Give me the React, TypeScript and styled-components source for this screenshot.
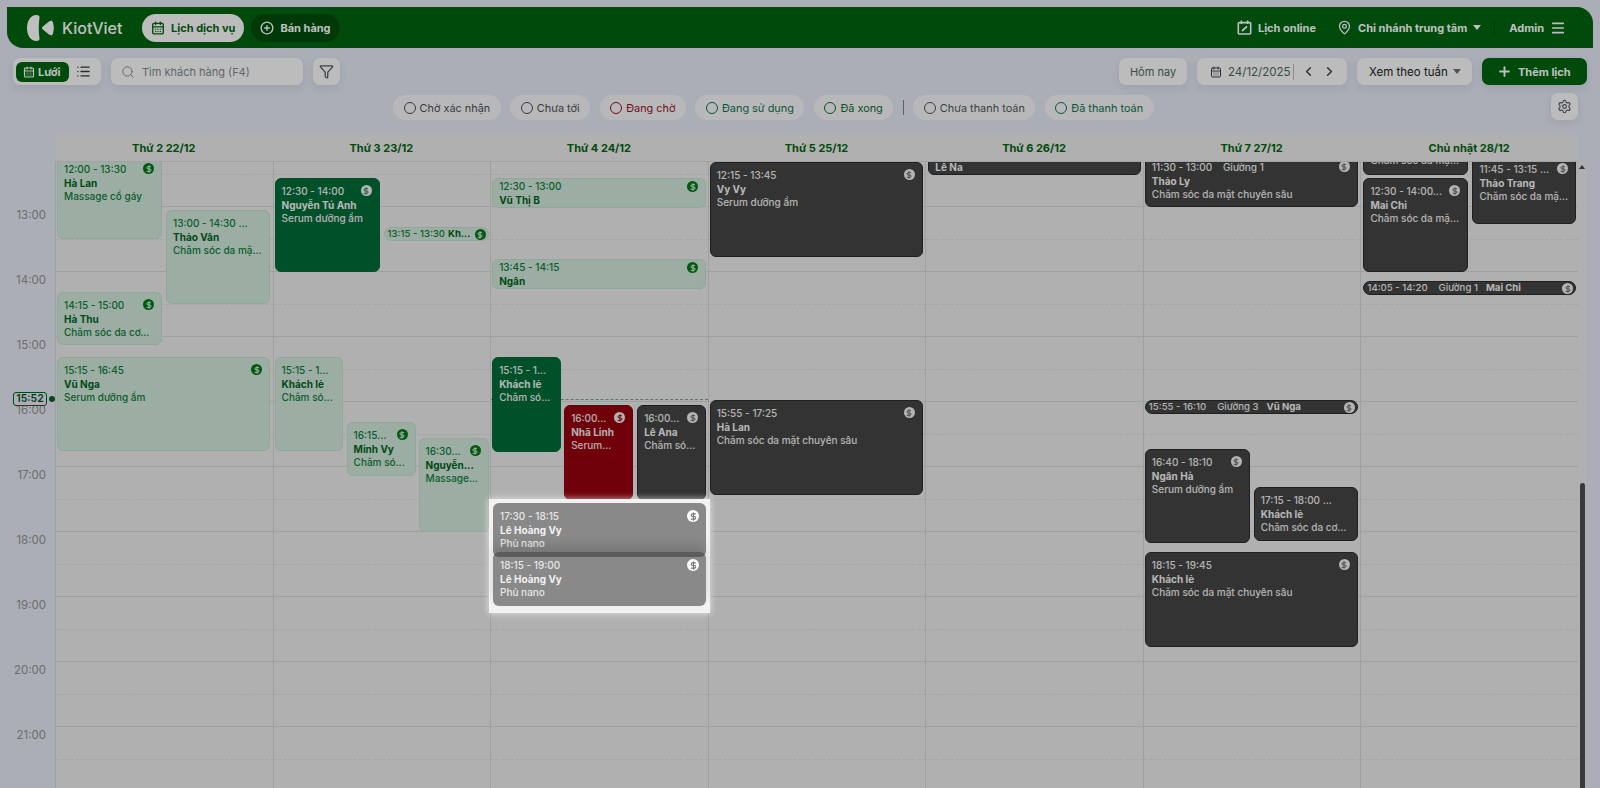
import React from 'react'
import styled, { createGlobalStyle } from 'styled-components'
import {
  CalendarDays,
  ChevronLeft,
  ChevronRight,
  CirclePlus,
  DollarSign,
  Funnel,
  List,
  MapPin,
  Menu,
  Plus,
  Search,
  Settings,
} from 'lucide-react'

type Kind = 'light' | 'green' | 'red' | 'dark'

interface Booking {
  kind: Kind
  top: number
  left: number
  width: number
  height: number
  time: string
  name?: string
  service?: string
  bed?: string
  bar?: boolean
  noBadge?: boolean
  short?: boolean
}

const GlobalStyle = createGlobalStyle`
  * { box-sizing: border-box; }
  html, body { margin: 0; height: 100%; overflow: hidden; }
  body {
    background: #e4e9f4;
    font-family: Inter, "Liberation Sans", sans-serif;
    font-size: 12px;
  }
`

const Page = styled.div`
  position: relative;
  width: 1600px;
  height: 788px;
  overflow: hidden;
  padding-top: 7px;
`

const TopBar = styled.header`
  display: flex;
  align-items: center;
  height: 41px;
  margin: 0 7px;
  padding: 0 27px 0 20px;
  background: #00650f;
  border-radius: 0 16px 0 16px;
  color: #fff;
  font-weight: 700;
`

const Brand = styled.div`
  display: flex;
  align-items: center;
  gap: 8px;
  width: 115px;
  font-size: 16px;
  font-weight: 500;
`

const NavPill = styled.div<{ $active?: boolean }>`
  display: flex;
  align-items: center;
  gap: 6px;
  height: 28px;
  padding: 0 9px;
  margin-right: 7px;
  border-radius: 14px;
  background: ${p => (p.$active ? '#fbfbfb' : '#004d0b')};
  color: ${p => (p.$active ? '#00650f' : '#fff')};
  font-size: 11px;
`

const TopRight = styled.div`
  display: flex;
  align-items: center;
  margin-left: auto;
`

const TopItem = styled.div<{ $gap?: number }>`
  display: flex;
  align-items: center;
  gap: 6px;
  margin-right: ${p => p.$gap || 0}px;
  white-space: nowrap;
  font-size: 11px;
`

const TopDivider = styled.div`
  width: 1px;
  height: 13px;
  margin: 0 14px 0 13px;
  background: #004d0b;
`

const Caret = styled.span<{ $color?: string }>`
  display: inline-block;
  width: 0;
  height: 0;
  border-left: 4.5px solid transparent;
  border-right: 4.5px solid transparent;
  border-top: 5px solid ${p => p.$color || '#fff'};
`

const ToolBar = styled.div`
  display: flex;
  justify-content: space-between;
  margin-top: 10px;
  padding: 0 13px;
`

const ToolGroup = styled.div`
  display: flex;
  gap: 10px;
`

const Box = styled.div`
  display: flex;
  align-items: center;
  height: 27px;
  background: #fbfbfb;
  border-radius: 7px;
  box-shadow: 0 3px 10px rgba(40, 50, 80, 0.1);
`

const ViewSwitch = styled(Box)`
  width: 88px;
  padding: 0 3px;
`

const ViewActive = styled.div`
  display: flex;
  align-items: center;
  gap: 3px;
  width: 53px;
  height: 20px;
  padding-left: 7px;
  background: #00650f;
  border-radius: 6px;
  color: #fff;
  font-weight: 700;
  font-size: 11px;
`

const ViewIcon = styled.div`
  display: flex;
  margin-left: 7px;
  color: #33403a;
`

const SearchBox = styled(Box)`
  gap: 7px;
  width: 192px;
  padding: 0 10px;
  color: #7f8a90;
  font-size: 11px;
`

const IconBox = styled(Box)`
  justify-content: center;
  width: 27px;
  color: #4c5560;
`

const TodayButton = styled(Box)`
  justify-content: center;
  width: 68px;
  color: #4d6a5d;
  font-size: 11px;
`

const DatePicker = styled(Box)`
  width: 150px;
  padding-left: 13px;
  color: #4d6a5d;
  font-size: 11.5px;
`

const DateText = styled.span`
  margin-left: 6px;
  padding-right: 2px;
  border-right: 1px solid #b9b9b9;
  line-height: 16px;
`

const DateNav = styled.div`
  display: flex;
  gap: 6px;
  margin-left: 7px;
  color: #3c4650;
`

const RangeSelect = styled(Box)`
  justify-content: space-between;
  width: 115px;
  padding: 0 11px 0 12px;
  color: #1a1f24;
  font-size: 11.5px;
`

const AddButton = styled(Box)`
  gap: 6px;
  width: 105px;
  padding-left: 15px;
  background: #00650f;
  color: #fff;
  font-weight: 700;
  font-size: 11px;
`

const StatusRow = styled.div`
  display: flex;
  align-items: flex-end;
  height: 27px;
  margin-top: 8px;
  padding: 0 22px 0 393px;
`

const StatusPills = styled.div`
  display: flex;
  align-items: center;
  gap: 9.5px;
`

const StatusPill = styled.div<{ $color: string }>`
  display: flex;
  align-items: center;
  gap: 4px;
  height: 25px;
  padding: 0 10.5px;
  background: #f6f6f8;
  border-radius: 13px;
  color: ${p => p.$color};
  font-size: 10.9px;
  white-space: nowrap;
`

const StatusRing = styled.span<{ $color: string }>`
  width: 12px;
  height: 12px;
  border: 1px solid ${p => p.$color};
  border-radius: 50%;
`

const StatusDivider = styled.div`
  width: 1px;
  height: 15px;
  background: #7d858c;
`

const GearBox = styled(IconBox)`
  margin-left: auto;
`

const Calendar = styled.section`
  margin-top: 14px;
`

const DayHead = styled.div`
  display: grid;
  grid-template-columns: repeat(7, 1fr);
  width: 1523px;
  height: 28px;
  margin-left: 55px;
  background: #ebebeb;
  border-radius: 6px 6px 0 0;
  border-bottom: 1px solid #d8d8d8;
`

const DayTitle = styled.div`
  display: flex;
  align-items: center;
  justify-content: center;
  color: #00650f;
  font-weight: 700;
  font-size: 11px;
`

const CalBody = styled.div`
  display: flex;
  height: 626px;
  overflow: hidden;
`

const TimeCol = styled.div`
  position: relative;
  flex: 0 0 55px;
`

const TimeList = styled.div`
  padding-top: 44px;
`

const TimeLabel = styled.div`
  height: 65px;
  padding: 3px 9px 0 0;
  color: #929292;
  font-size: 11.5px;
  line-height: 13px;
  text-align: right;
`

const NowTag = styled.div`
  position: absolute;
  top: 230px;
  left: 13px;
  width: 34px;
  height: 14px;
  background: #e4e9f4;
  border: 1px solid #00651f;
  border-radius: 3px;
  color: #0a4f2a;
  font-size: 10.5px;
  font-weight: 600;
  line-height: 12px;
  text-align: center;

  &::after {
    content: '';
    position: absolute;
    top: 3px;
    left: 35px;
    width: 6px;
    height: 6px;
    background: #00651f;
    border-radius: 50%;
  }
`

const DaysGrid = styled.div`
  display: grid;
  grid-template-columns: repeat(7, 1fr);
  flex: 0 0 1523px;
  background: #ebebeb;
`

const DayCol = styled.div`
  position: relative;
  min-width: 0;
  border-left: 1px solid #d6d6d6;
`

const HourStack = styled.div`
  margin-top: -21px;
`

const HourCell = styled.div`
  height: 65px;
  border-top: 1px solid #d6d6d6;

  &::after {
    content: '';
    display: block;
    height: 32px;
    border-bottom: 1px dashed #dedede;
  }
`

const NowLine = styled.div`
  position: absolute;
  top: 237px;
  left: 0;
  right: 0;
  border-top: 1px dashed #7f9f8c;
`

const Track = styled.div`
  display: flex;
  flex-direction: column;
  align-items: center;
  flex: 0 0 8px;
  padding-top: 3px;
  background: #ebebeb;
`

const TrackArrow = styled.span`
  width: 0;
  height: 0;
  border-left: 3px solid transparent;
  border-right: 3px solid transparent;
  border-bottom: 4px solid #444;
`

const TrackThumb = styled.div`
  width: 5px;
  height: 305px;
  margin-top: auto;
  background: #4c4c4c;
  border-radius: 3px 3px 0 0;
`

const kindStyles: Record<Kind, { bg: string; line: string; text: string; strong: string; badge: string; mark: string }> = {
  light: { bg: '#d1e7db', line: '#bfe0cd', text: '#0e7d3a', strong: '#00651c', badge: '#007815', mark: '#e6efe9' },
  green: { bg: '#006d38', line: '#006d38', text: '#efefef', strong: '#f4f4f4', badge: '#f1f1f1', mark: '#2c8157' },
  red: { bg: '#96000c', line: '#8a000a', text: '#f1e6e6', strong: '#f4e8e8', badge: '#efefef', mark: '#96000c' },
  dark: { bg: '#444444', line: '#2a2a2a', text: '#efefef', strong: '#f4f4f4', badge: '#f0f0f0', mark: '#666' },
}

const Card = styled.article<{ $kind: Kind; $short?: boolean }>`
  position: absolute;
  overflow: hidden;
  padding: ${p => (p.$short ? 1 : 6)}px 6px 0;
  background: ${p => kindStyles[p.$kind].bg};
  border: 1px solid ${p => kindStyles[p.$kind].line};
  border-radius: 6px;
  color: ${p => kindStyles[p.$kind].text};
  font-size: 10px;
  font-weight: 500;
  line-height: 13.5px;
  white-space: pre;
`

const CardName = styled.div<{ $kind: Kind }>`
  color: ${p => kindStyles[p.$kind].strong};
  font-weight: 700;
`

const Bar = styled.article<{ $kind: Kind }>`
  position: absolute;
  display: flex;
  align-items: center;
  gap: 3px;
  overflow: hidden;
  padding-left: 3px;
  background: ${p => kindStyles[p.$kind].bg};
  border: 1px solid ${p => kindStyles[p.$kind].line};
  border-radius: 7px;
  color: ${p => kindStyles[p.$kind].text};
  font-size: 9.6px;
  font-weight: 500;
  line-height: 12px;
  white-space: nowrap;
`

const BarBed = styled.span`
  margin-left: 8px;
`

const BarName = styled.strong<{ $kind: Kind; $spaced?: boolean }>`
  margin-left: ${p => (p.$spaced ? 5 : 0)}px;
  color: ${p => kindStyles[p.$kind].strong};
`

const Badge = styled.span<{ $kind: Kind; $bar?: boolean; $short?: boolean }>`
  position: absolute;
  top: ${p => (p.$bar ? 1 : p.$short ? 2 : 6)}px;
  right: ${p => (p.$bar ? 2 : 7)}px;
  display: flex;
  align-items: center;
  justify-content: center;
  width: 11px;
  height: 11px;
  background: ${p => kindStyles[p.$kind].badge};
  border-radius: 50%;
  color: ${p => kindStyles[p.$kind].mark};
`

const Spotlight = styled.div`
  position: absolute;
  top: 499px;
  left: 489px;
  display: flex;
  flex-direction: column;
  width: 221px;
  height: 114px;
  padding: 4px 4px 0;
  background: #f2f2f2;
  box-shadow: 0 0 6px 1px rgba(255, 255, 255, 0.55), 0 0 0 2400px rgba(0, 0, 0, 0.25);
`

const SpotCard = styled.article`
  position: relative;
  flex: 0 0 54px;
  padding: 7px 7px 0;
  background: rgba(60, 60, 60, 0.58);
  border-radius: 6px;
  color: #e6e6e6;
  font-size: 10px;
  font-weight: 500;
  line-height: 13.5px;

  & + & {
    margin-top: -5px;
    box-shadow: 0 -7px 10px rgba(0, 0, 0, 0.12);
  }
`

const SpotName = styled.div`
  color: #f2f2f2;
  font-weight: 700;
`

const SpotBadge = styled.span`
  position: absolute;
  top: 7px;
  right: 7px;
  display: flex;
  align-items: center;
  justify-content: center;
  width: 12px;
  height: 12px;
  background: #fff;
  border-radius: 50%;
  color: #777;
`

const days = ['Thứ 2 22/12', 'Thứ 3 23/12', 'Thứ 4 24/12', 'Thứ 5 25/12', 'Thứ 6 26/12', 'Thứ 7 27/12', 'Chủ nhật 28/12']

const hours = ['13:00', '14:00', '15:00', '16:00', '17:00', '18:00', '19:00', '20:00', '21:00']

const statuses = [
  { label: 'Chờ xác nhận', color: '#4a4f55' },
  { label: 'Chưa tới', color: '#4a4f55' },
  { label: 'Đang chờ', color: '#9a0f2c' },
  { label: 'Đang sử dụng', color: '#0a7451' },
  { label: 'Đã xong', color: '#0a6b2c' },
  { label: 'Chưa thanh toán', color: '#4a5a55', divider: true },
  { label: 'Đã thanh toán', color: '#0a7451' },
]

const bookings: Booking[][] = [
  [
    { kind: 'light', top: -6, left: 1, width: 105, height: 83, time: '12:00 - 13:30', name: 'Hà Lan', service: 'Massage cổ gáy' },
    { kind: 'light', top: 48, left: 110, width: 104, height: 94, time: '13:00 - 14:30 ...', name: 'Thảo Vân', service: 'Chăm sóc da mặ...', noBadge: true },
    { kind: 'light', top: 130, left: 1, width: 105, height: 53, time: '14:15 - 15:00', name: 'Hà Thu', service: 'Chăm sóc da cơ...' },
    { kind: 'light', top: 195, left: 1, width: 213, height: 94, time: '15:15 - 16:45', name: 'Vũ Nga', service: 'Serum dưỡng ẩm' },
  ],
  [
    { kind: 'green', top: 16, left: 1, width: 105, height: 94, time: '12:30 - 14:00', name: 'Nguyễn Tú Anh', service: 'Serum dưỡng ẩm' },
    { kind: 'light', top: 65, left: 110, width: 105, height: 14, time: '13:15 - 13:30', name: 'Kh...', bar: true },
    { kind: 'light', top: 195, left: 1, width: 68, height: 94, time: '15:15 - 1...', name: 'Khách lẻ', service: 'Chăm só...', noBadge: true },
    { kind: 'light', top: 260, left: 73, width: 69, height: 54, time: '16:15...', name: 'Minh Vy', service: 'Chăm só...' },
    { kind: 'light', top: 276, left: 145, width: 70, height: 94, time: '16:30...', name: 'Nguyễn...', service: 'Massage...' },
  ],
  [
    { kind: 'light', top: 16, left: 1, width: 214, height: 30, time: '12:30 - 13:00', name: 'Vũ Thị B', short: true },
    { kind: 'light', top: 97, left: 1, width: 214, height: 30, time: '13:45 - 14:15', name: 'Ngân', short: true },
    { kind: 'green', top: 195, left: 1, width: 69, height: 95, time: '15:15 - 1...', name: 'Khách lẻ', service: 'Chăm só...', noBadge: true },
    { kind: 'red', top: 243, left: 73, width: 69, height: 95, time: '16:00...', name: 'Nhã Linh', service: 'Serum...' },
    { kind: 'dark', top: 243, left: 146, width: 69, height: 95, time: '16:00...', name: 'Lê Ana', service: 'Chăm só...' },
  ],
  [
    { kind: 'dark', top: 0, left: 1, width: 213, height: 95, time: '12:15 - 13:45', name: 'Vy Vy', service: 'Serum dưỡng ẩm' },
    { kind: 'dark', top: 238, left: 1, width: 213, height: 95, time: '15:55 - 17:25', name: 'Hà Lan', service: 'Chăm sóc da mặt chuyên sâu' },
  ],
  [
    { kind: 'dark', top: -22, left: 2, width: 213, height: 35, time: '10:45 - 12:15', name: 'Lê Na', noBadge: true },
  ],
  [
    { kind: 'dark', top: -8, left: 1, width: 213, height: 53, time: '11:30 - 13:00    Giường 1', name: 'Thảo Ly', service: 'Chăm sóc da mặt chuyên sâu' },
    { kind: 'dark', top: 238, left: 1, width: 213, height: 14, time: '15:55 - 16:10', bed: 'Giường 3', name: 'Vũ Nga', bar: true },
    { kind: 'dark', top: 287, left: 1, width: 105, height: 94, time: '16:40 - 18:10', name: 'Ngân Hà', service: 'Serum dưỡng ẩm' },
    { kind: 'dark', top: 325, left: 110, width: 104, height: 54, time: '17:15 - 18:00 ...', name: 'Khách lẻ', service: 'Chăm sóc da cơ...', noBadge: true },
    { kind: 'dark', top: 390, left: 1, width: 213, height: 95, time: '18:15 - 19:45', name: 'Khách lẻ', service: 'Chăm sóc da mặt chuyên sâu' },
  ],
  [
    { kind: 'dark', top: -42, left: 2, width: 105, height: 55, time: '11:00 - 12:30...', name: 'Mai Chi', service: 'Chăm sóc da mặ...', noBadge: true },
    { kind: 'dark', top: 16, left: 2, width: 105, height: 94, time: '12:30 - 14:00...', name: 'Mai Chi', service: 'Chăm sóc da mặ...' },
    { kind: 'dark', top: -6, left: 111, width: 104, height: 68, time: '11:45 - 13:15 ...', name: 'Thảo Trang', service: 'Chăm sóc da mặ...' },
    { kind: 'dark', top: 119, left: 2, width: 213, height: 14, time: '14:05 - 14:20', bed: 'Giường 1', name: 'Mai Chi', bar: true },
  ],
]

const Logo = () => (
  <svg width="27" height="26" viewBox="0 0 27 26" fill="#fff">
    <path d="M9.5 0C3.5 0 0 6 0 13s3.5 13 9.5 13c2.5 0 3.3-1.5 3-3-1-6-1-14 0-20 .3-1.5-.5-3-3-3z" />
    <path d="M15.6 11.8 22 6.4C24 5 25.5 5.6 26 7.5c1 3.5 1 7.5 0 11-.5 1.9-2 2.5-4 1.1l-6.4-5.4c-.8-.8-.8-1.6 0-2.4z" />
  </svg>
)

const OnlineIcon = () => (
  <svg width="15" height="15" viewBox="0 0 15 15" fill="none" stroke="currentColor" strokeWidth="1.6">
    <rect x="1.3" y="2.6" width="12.4" height="11.4" rx="1" />
    <path d="M4.4 0.6v3.4M10.6 0.6v3.4" />
    <path d="M5 11l5-4.6" strokeWidth="1.8" />
  </svg>
)

const BookingCard = ({ item }: { item: Booking }) => {
  const place = { top: item.top, left: item.left, width: item.width, height: item.height }
  const mark = <DollarSign size={8} strokeWidth={3} />

  if (item.bar) {
    return (
      <Bar $kind={item.kind} style={place}>
        <span>{item.time}</span>
        {item.bed && <BarBed>{item.bed}</BarBed>}
        <BarName $kind={item.kind} $spaced={!!item.bed}>{item.name}</BarName>
        <Badge $kind={item.kind} $bar>{mark}</Badge>
      </Bar>
    )
  }

  return (
    <Card $kind={item.kind} $short={item.short} style={place}>
      <div>{item.time}</div>
      <CardName $kind={item.kind}>{item.name}</CardName>
      {item.service && <div>{item.service}</div>}
      {!item.noBadge && <Badge $kind={item.kind} $short={item.short}>{mark}</Badge>}
    </Card>
  )
}

const App = () => {
  return (
    <Page>
      <GlobalStyle />
      <TopBar>
        <Brand>
          <Logo />
          KiotViet
        </Brand>
        <NavPill $active>
          <CalendarDays size={14} strokeWidth={2.4} />
          Lịch dịch vụ
        </NavPill>
        <NavPill>
          <CirclePlus size={14} strokeWidth={2.4} />
          Bán hàng
        </NavPill>
        <TopRight>
          <TopItem $gap={21}>
            <OnlineIcon />
            Lịch online
          </TopItem>
          <TopItem>
            <MapPin size={15} strokeWidth={2} />
            Chi nhánh trung tâm
            <Caret />
          </TopItem>
          <TopDivider />
          <TopItem>
            Admin
            <Menu size={16} strokeWidth={2.4} />
          </TopItem>
        </TopRight>
      </TopBar>

      <ToolBar>
        <ToolGroup>
          <ViewSwitch>
            <ViewActive>
              <CalendarDays size={12} strokeWidth={2.4} />
              Lưới
            </ViewActive>
            <ViewIcon>
              <List size={15} strokeWidth={2.2} />
            </ViewIcon>
          </ViewSwitch>
          <SearchBox>
            <Search size={14} strokeWidth={1.6} />
            Tìm khách hàng (F4)
          </SearchBox>
          <IconBox>
            <Funnel size={15} />
          </IconBox>
        </ToolGroup>
        <ToolGroup>
          <TodayButton>Hôm nay</TodayButton>
          <DatePicker>
            <CalendarDays size={12} color="#3c4650" />
            <DateText>24/12/2025</DateText>
            <DateNav>
              <ChevronLeft size={15} strokeWidth={2.5} />
              <ChevronRight size={15} strokeWidth={2.5} />
            </DateNav>
          </DatePicker>
          <RangeSelect>
            Xem theo tuần
            <Caret $color="#6b7178" />
          </RangeSelect>
          <AddButton>
            <Plus size={15} strokeWidth={3} />
            Thêm lịch
          </AddButton>
        </ToolGroup>
      </ToolBar>

      <StatusRow>
        <StatusPills>
          {statuses.map(s => (
            <React.Fragment key={s.label}>
              {s.divider && <StatusDivider />}
              <StatusPill $color={s.color}>
                <StatusRing $color={s.color} />
                {s.label}
              </StatusPill>
            </React.Fragment>
          ))}
        </StatusPills>
        <GearBox>
          <Settings size={15} strokeWidth={1.7} />
        </GearBox>
      </StatusRow>

      <Calendar>
        <DayHead>
          {days.map(d => (
            <DayTitle key={d}>{d}</DayTitle>
          ))}
        </DayHead>
        <CalBody>
          <TimeCol>
            <TimeList>
              {hours.map(h => (
                <TimeLabel key={h}>{h}</TimeLabel>
              ))}
            </TimeList>
            <NowTag>15:52</NowTag>
          </TimeCol>
          <DaysGrid>
            {bookings.map((col, i) => (
              <DayCol key={days[i]}>
                <HourStack>
                  {['12:00', ...hours].map(h => (
                    <HourCell key={h} />
                  ))}
                </HourStack>
                {i === 2 && <NowLine />}
                {col.map(item => (
                  <BookingCard key={item.time + item.top} item={item} />
                ))}
              </DayCol>
            ))}
          </DaysGrid>
          <Track>
            <TrackArrow />
            <TrackThumb />
          </Track>
        </CalBody>
      </Calendar>

      <Spotlight>
        <SpotCard>
          <div>17:30 - 18:15</div>
          <SpotName>Lê Hoàng Vy</SpotName>
          <div>Phủ nano</div>
          <SpotBadge><DollarSign size={9} strokeWidth={3} /></SpotBadge>
        </SpotCard>
        <SpotCard>
          <div>18:15 - 19:00</div>
          <SpotName>Lê Hoàng Vy</SpotName>
          <div>Phủ nano</div>
          <SpotBadge><DollarSign size={9} strokeWidth={3} /></SpotBadge>
        </SpotCard>
      </Spotlight>
    </Page>
  )
}

export default App
